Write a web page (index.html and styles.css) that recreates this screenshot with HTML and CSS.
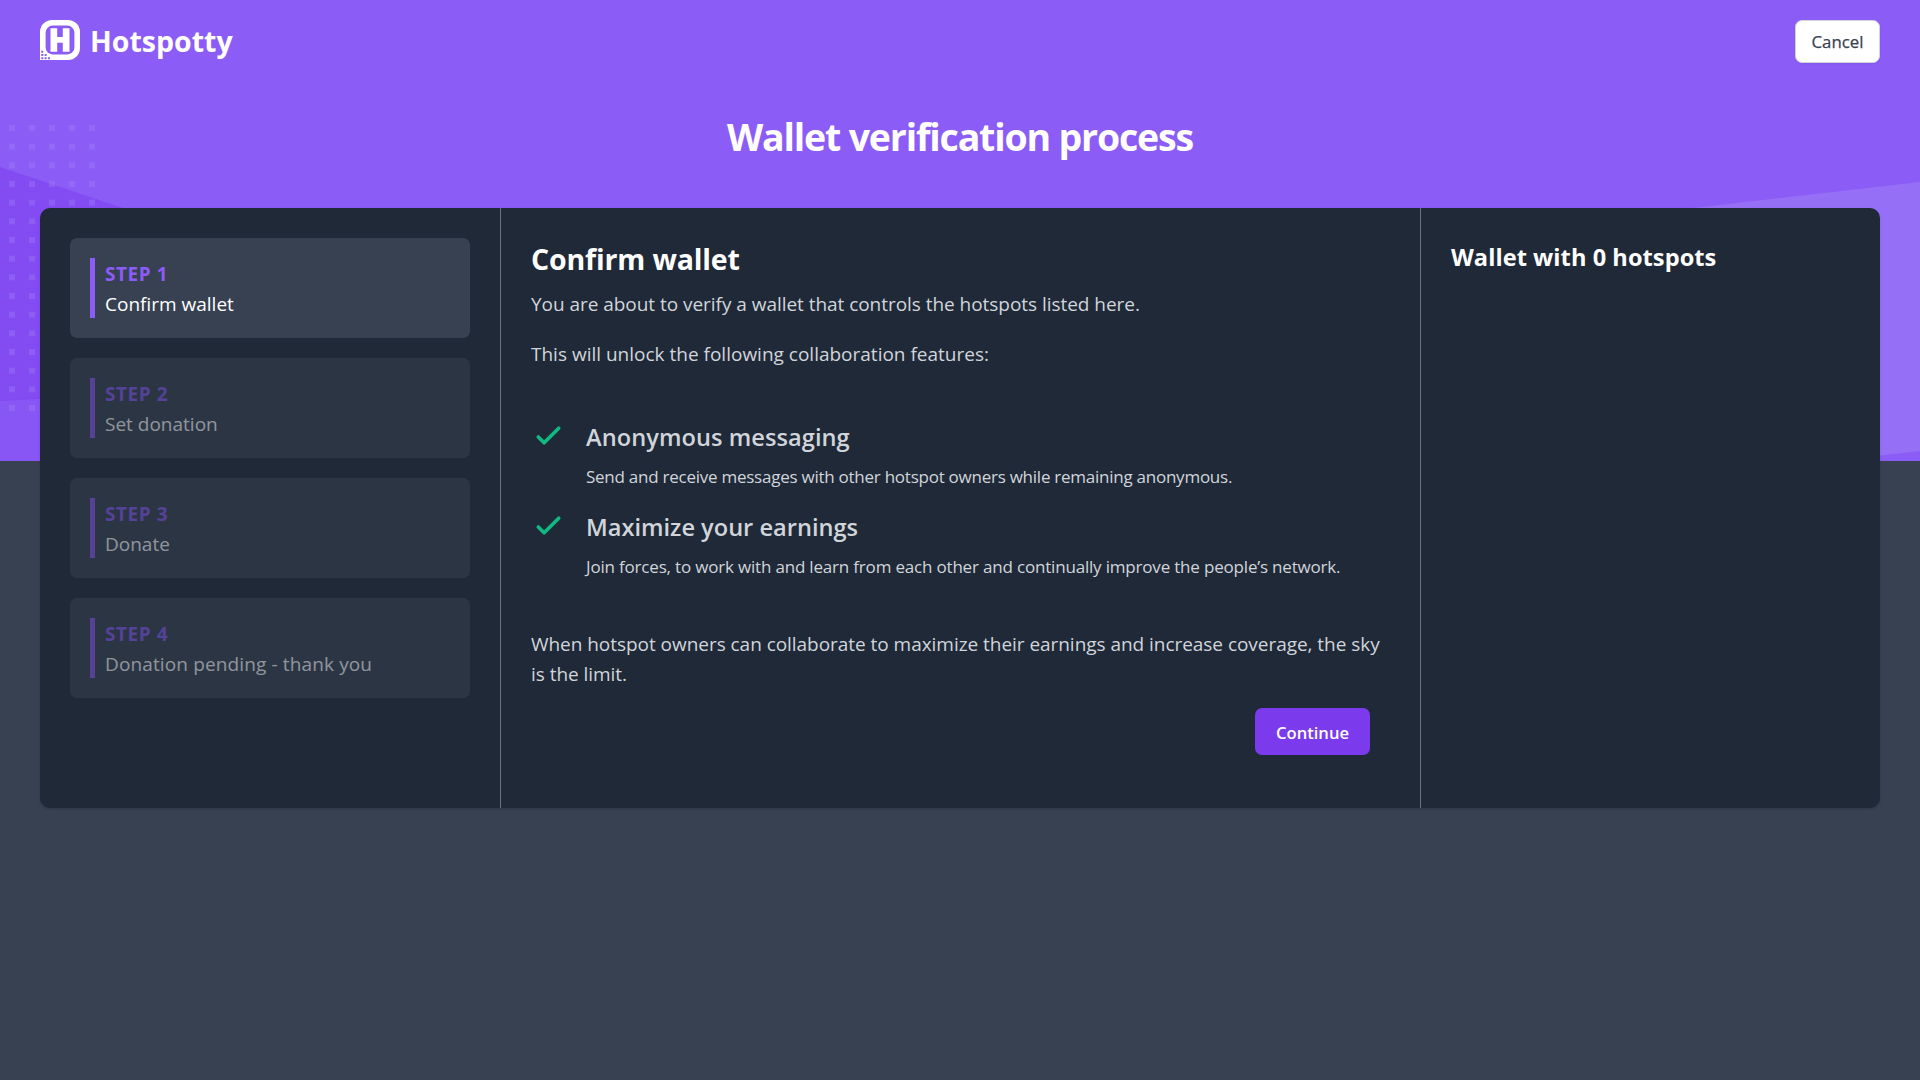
FILE: index.html
```html
<!DOCTYPE html>
<html lang="en">
<head>
<meta charset="utf-8">
<title>Hotspotty - Wallet verification</title>
<link rel="stylesheet" href="styles.css">
</head>
<body>
<div class="page">
  <div class="banner">
    <svg class="banner-art" width="1920" height="461" viewBox="0 0 1920 461" aria-hidden="true">
      <defs>
        <pattern id="dots" x="9" y="125" width="20" height="18.667" patternUnits="userSpaceOnUse">
          <rect width="6" height="6" fill="#a78bfa" fill-opacity=".3"/>
        </pattern>
      </defs>
      <path d="M0 167 L600 367 L0 401Z" fill="#7c3aed" fill-opacity=".5"/>
      <path d="M0 401 L600 337 V461 H0Z" fill="#7c3aed" fill-opacity=".16"/>
      <path d="M1320 251 L1920 182 V451 L1320 520Z" fill="#a78bfa" fill-opacity=".4"/>
      <rect x="9" y="125" width="90" height="288" fill="url(#dots)"/>
    </svg>
  </div>
  <header class="topbar">
    <div class="brand">
      <svg class="logo" width="40" height="40" viewBox="0 0 40 40" aria-hidden="true">
        <path d="M12 0H28A12 12 0 0 1 40 12V28A12 12 0 0 1 28 40H0V12A12 12 0 0 1 12 0Z" fill="#fff"/>
        <rect x="5.6" y="5.6" width="28.8" height="28.8" rx="7" fill="#8b5cf6"/>
        <path d="M10.5 8.2H17.2V17H22.8V8.2H29.5V31.8H22.8V22.8H17.2V31.8H10.5Z" fill="#fff"/>
        <path d="M1.3 30.7h2v2h-2zM1.3 34h2v2h-2zM4.6 34h2v2h-2zM1.3 37.2h2v2h-2zM4.6 37.2h2v2h-2zM7.9 37.2h2v2h-2z" fill="#8b5cf6"/>
      </svg>
      <span class="brand-name">Hotspotty</span>
    </div>
    <button class="cancel">Cancel</button>
  </header>
  <h1 class="title">Wallet verification process</h1>
  <main class="card">
    <nav class="steps">
      <div class="step active"><div class="step-body"><span class="step-no">STEP 1</span><span class="step-name">Confirm wallet</span></div></div>
      <div class="step"><div class="step-body"><span class="step-no">STEP 2</span><span class="step-name">Set donation</span></div></div>
      <div class="step"><div class="step-body"><span class="step-no">STEP 3</span><span class="step-name">Donate</span></div></div>
      <div class="step"><div class="step-body"><span class="step-no">STEP 4</span><span class="step-name wide">Donation pending - thank you</span></div></div>
    </nav>
    <section class="content">
      <h2 class="heading">Confirm wallet</h2>
      <p class="text">You are about to verify a wallet that controls the hotspots listed here.</p>
      <p class="text second">This will unlock the following collaboration features:</p>
      <ul class="features">
        <li class="feature messaging">
          <svg class="check" viewBox="0 0 24 24" aria-hidden="true"><path d="M5 13l4 4L19 7"/></svg>
          <div><h3 class="feature-name">Anonymous messaging</h3><p class="feature-text">Send and receive messages with other hotspot owners while remaining anonymous.</p></div>
        </li>
        <li class="feature earnings">
          <svg class="check" viewBox="0 0 24 24" aria-hidden="true"><path d="M5 13l4 4L19 7"/></svg>
          <div><h3 class="feature-name">Maximize your earnings</h3><p class="feature-text">Join forces, to work with and learn from each other and continually improve the people’s network.</p></div>
        </li>
      </ul>
      <p class="text closing">When hotspot owners can collaborate to maximize their earnings and increase coverage, the sky<br>is the limit.</p>
      <div class="actions"><button class="continue">Continue</button></div>
    </section>
    <aside class="wallet"><h2 class="wallet-title">Wallet with 0 hotspots</h2></aside>
  </main>
</div>
</body>
</html>
```
FILE: styles.css
```css
* { box-sizing: border-box; margin: 0; padding: 0; }
body { background: #374151; font-family: "Open Sans", "Noto Sans", sans-serif; font-size: 19px; color: #d1d5db; }
.page { position: relative; min-height: 1080px; padding: 0 40px; }
.banner { position: absolute; inset: 0 0 auto 0; height: 461px; background: #8b5cf6; overflow: hidden; }
.banner-art { display: block; }
.topbar { position: relative; display: flex; justify-content: space-between; align-items: flex-start; height: 83px; padding-top: 20px; }
.brand { display: flex; align-items: center; gap: 10px; height: 40px; }
.brand-name { font-size: 28.5px; font-weight: 700; line-height: 40px; color: #fff; padding-top: 2px; }
.cancel { width: 85px; height: 43px; border: 1px solid #d1d5db; border-radius: 7px; background: #fff; color: #374151; font: 500 16.8px/41px "Open Sans", sans-serif; -webkit-text-stroke: .25px #374151; box-shadow: 0 1px 2px rgba(0,0,0,.05); }
.title { position: relative; height: 125px; padding-top: 29px; font-size: 37.5px; line-height: 50px; font-weight: 700; letter-spacing: -1.18px; color: #fff; text-align: center; }
.card { position: relative; display: grid; grid-template-columns: 460px 921px 1fr; height: 600px; border-radius: 10px; background: #1f2937; box-shadow: 0 1px 3px rgba(0,0,0,.1), 0 1px 2px rgba(0,0,0,.06); }
.steps { display: flex; flex-direction: column; gap: 20px; padding: 30px; }
.step { height: 100px; padding: 20px; border-radius: 7px; background: #374151; opacity: .5; }
.step.active { opacity: 1; }
.step-body { display: flex; flex-direction: column; height: 60px; border-left: 5px solid #8b5cf6; padding: 1px 0 0 10px; line-height: 30px; }
.step-no { font-weight: 700; letter-spacing: .55px; color: #8b5cf6; }
.step-name { color: #fff; }
.step-name.wide { letter-spacing: .13px; }
.content { border-left: 1px solid #6b7280; border-right: 1px solid #6b7280; padding: 30px; }
.heading { font-size: 28.5px; line-height: 40px; font-weight: 700; letter-spacing: -.15px; color: #fff; padding-top: 1px; }
.text { line-height: 30px; letter-spacing: -.04px; white-space: nowrap; margin-top: 10px; }
.text.second { margin-top: 20px; letter-spacing: 0; }
.features { list-style: none; display: flex; flex-direction: column; gap: 20px; margin-top: 50px; }
.feature { display: flex; gap: 20px; height: 70px; }
.check { width: 35px; height: 35px; margin-top: -1px; fill: none; stroke: #10b981; stroke-width: 2.5; stroke-linecap: round; stroke-linejoin: round; }
.feature-name { font-size: 23.6px; line-height: 35px; font-weight: 600; padding-top: 1px; }
.feature-text { font-size: 17px; line-height: 25px; margin-top: 9px; white-space: nowrap; }
.messaging .feature-name { letter-spacing: .06px; }
.messaging .feature-text { letter-spacing: -.25px; }
.earnings .feature-text { letter-spacing: -.185px; }
.closing { margin-top: 50px; }
.actions { display: flex; justify-content: flex-end; padding: 19px 20px 0 0; }
.continue { width: 115px; height: 47px; border: 0; border-radius: 7px; background: #7c3aed; color: #fff; font: 600 16.6px/47px "Open Sans", sans-serif; padding-top: 1px; }
.wallet { padding: 30px; }
.wallet-title { font-size: 23.6px; line-height: 38px; font-weight: 700; letter-spacing: .05px; color: #fff; }
```
